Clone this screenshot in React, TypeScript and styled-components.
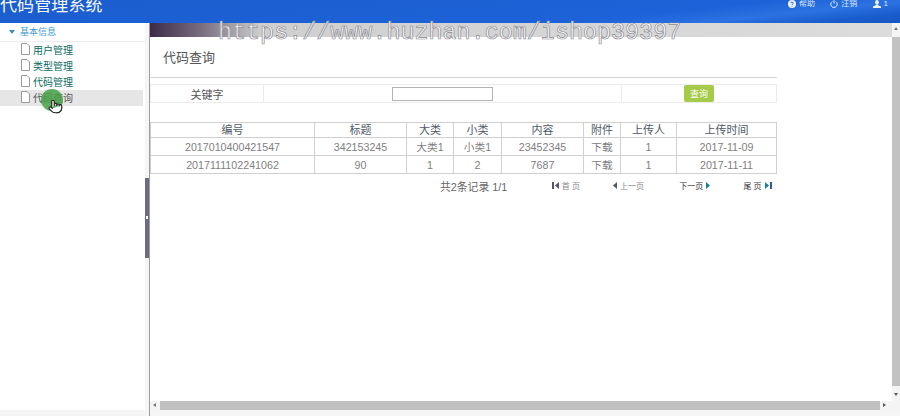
// Code management admin page: query screen

import React from 'react';
import styled, { createGlobalStyle } from 'styled-components';
import { Pointer } from 'lucide-react';

const GlobalStyle = createGlobalStyle`
  * {
    margin: 0;
    padding: 0;
    box-sizing: border-box;
  }
  html, body {
    width: 100%;
    height: 100%;
    background-color: #ffffff;
    overflow: hidden;
  }
`;

const Page = styled.div`
  position: relative;
  width: 900px;
  height: 416px;
  overflow: hidden;
  display: flex;
  flex-direction: column;
  background: #fff;
  font-family: 'Liberation Sans', 'Noto Sans CJK SC', sans-serif;
  color: #666;
`;

const Header = styled.header`
  height: 23px;
  flex: none;
  display: flex;
  justify-content: space-between;
  align-items: flex-start;
  overflow: hidden;
  background: linear-gradient(174deg, #1b5dce 0%, #1d62d8 70%, #2c72e2 82%, #1a5ccc 92%, #1856c4 100%);
`;

const Brand = styled.h1`
  font-size: 17px;
  line-height: 17px;
  margin-top: -3px;
  font-weight: 400;
  letter-spacing: 0.1px;
  color: #f6f8fd;
`;

const HeaderTools = styled.div`
  display: flex;
  width: 100px;
  margin-right: 12px;
  justify-content: space-between;
`;

const HeaderTool = styled.span`
  display: flex;
  align-items: center;
  gap: 3px;
  height: 8px;
  font-size: 8px;
  line-height: 8px;
  color: #dce8fa;
`;

const Body = styled.div`
  flex: 1;
  min-height: 0;
  display: flex;
`;

const Sidebar = styled.aside`
  width: 145px;
  flex: none;
  display: flex;
  flex-direction: column;
  background: #fff;
`;

const GroupTitle = styled.div`
  height: 19px;
  flex: none;
  display: flex;
  align-items: center;
  gap: 4px;
  padding: 0 0 1px 9px;
  font-size: 9px;
  color: #3f9ad0;
  border-bottom: 1px solid #ececec;
`;

const GroupArrow = styled.i`
  width: 0;
  height: 0;
  margin-right: 1px;
  border-left: 3px solid transparent;
  border-right: 3px solid transparent;
  border-top: 4px solid #3f8fd0;
`;

const MenuList = styled.ul`
  list-style: none;
  margin-right: 2px;
`;

const MenuItem = styled.li<{ $active?: boolean }>`
  height: 16px;
  display: flex;
  align-items: center;
  gap: 3px;
  padding: 0 0 2px 21px;
  font-size: 10px;
  color: ${(p) => (p.$active ? '#555' : '#0b6a62')};
  background: ${(p) => (p.$active ? '#e6e6e6' : 'transparent')};
`;

const Splitter = styled.div`
  width: 5px;
  flex: none;
  display: flex;
  align-items: center;
  background: #f6f6f6;
  border-right: 1px solid #9d9d9d;
  padding-bottom: 4px;
`;

const SplitterHandle = styled.div`
  position: relative;
  width: 4px;
  height: 80px;
  background: #6a6a8a;
  &::after {
    content: '';
    position: absolute;
    left: 1px;
    top: 38px;
    width: 2px;
    height: 3px;
    background: #fff;
  }
`;

const Main = styled.div`
  flex: 1;
  min-width: 0;
  display: grid;
  grid-template-columns: 1fr 8px;
  grid-template-rows: 1fr 9px 6px;
`;

const Content = styled.main`
  min-width: 0;
  overflow: hidden;
`;

const TopStripe = styled.div`
  height: 14px;
  background: linear-gradient(90deg, #3d2a48 0%, #7a6e80 7%, #cfcfcf 15%, #dcdcdc 100%);
`;

const Panel = styled.section`
  width: 627px;
`;

const PageTitle = styled.h2`
  height: 41px;
  padding: 13px 0 0 13px;
  font-size: 13px;
  line-height: 16px;
  font-weight: 400;
  color: #555;
  border-bottom: 1px solid #d8d8d8;
`;

const SearchRow = styled.div`
  margin-top: 6px;
  height: 19px;
  display: grid;
  grid-template-columns: 112px 358px 155px;
  border: 1px solid #ececec;
  font-size: 11px;
`;

const SearchCell = styled.div`
  display: flex;
  align-items: center;
  justify-content: center;
  color: #555;
  & + & {
    border-left: 1px solid #ececec;
  }
`;

const SearchInput = styled.input`
  width: 101px;
  height: 14px;
  border: 1px solid #b4b4b4;
  background: #fff;
`;

const SearchButton = styled.button`
  width: 30px;
  height: 17px;
  border: 0;
  border-radius: 2px;
  background: #a5cb48;
  color: #fff;
  font: 9px 'Liberation Sans', 'Noto Sans CJK SC', sans-serif;
`;

const Table = styled.table`
  width: 627px;
  margin-top: 19px;
  border-collapse: collapse;
  table-layout: fixed;
  font-size: 11px;
  border: 1px solid #d0d0d0;
`;

const Th = styled.th`
  height: 15px;
  font-weight: 400;
  color: #4f5a68;
  border: 1px solid #d0d0d0;
  padding: 1px 0 0;
  line-height: 13px;
`;

const Td = styled.td`
  height: 18px;
  text-align: center;
  font-size: 10.7px;
  color: #808080;
  border: 1px solid #d0d0d0;
  padding: 1px 0 0;
  line-height: 13px;
`;

const Pager = styled.div`
  display: flex;
  align-items: center;
  height: 23px;
  padding: 0 0 0 290px;
  font-size: 8px;
  color: #777;
`;

const PagerTotal = styled.span`
  width: 113px;
  font-size: 10.8px;
  color: #666;
`;

const PagerLink = styled.span<{ $width: number; $dark?: boolean }>`
  display: flex;
  align-items: center;
  gap: 2px;
  width: ${(p) => p.$width}px;
  color: ${(p) => (p.$dark ? '#333' : '#888')};
  white-space: nowrap;
`;

const VScroll = styled.div`
  position: relative;
  background: #f4f4f4;
  display: flex;
  flex-direction: column;
  grid-row: 1;
  grid-column: 2;
`;

const ScrollThumbV = styled.div`
  flex: 1;
  background: #c2c2c2;
  margin: 14px 0 15px;
`;

const ScrollArrow = styled.i<{ $dir: 'up' | 'down' | 'left' | 'right' }>`
  position: absolute;
  width: 0;
  height: 0;
  ${(p) => (p.$dir === 'up' || p.$dir === 'down') && `
    left: 2px;
    border-left: 2px solid transparent;
    border-right: 2px solid transparent;
  `}
  ${(p) => (p.$dir === 'left' || p.$dir === 'right') && `
    top: 2px;
    border-top: 2px solid transparent;
    border-bottom: 2px solid transparent;
  `}
  ${(p) => p.$dir === 'up' && 'top: 4px; border-bottom: 3px solid #777;'}
  ${(p) => p.$dir === 'down' && 'bottom: 5px; border-top: 3px solid #555;'}
  ${(p) => p.$dir === 'left' && 'left: 3px; border-right: 3px solid #777;'}
  ${(p) => p.$dir === 'right' && 'right: 14px; border-left: 3px solid #555;'}
`;

const HScroll = styled.div`
  position: relative;
  grid-row: 2;
  grid-column: 1 / 3;
  display: flex;
  align-items: stretch;
  background: #f4f4f4;
  padding: 0 20px 0 10px;
`;

const ScrollThumbH = styled.div`
  flex: 1;
  background: #c0c0c0;
`;

const BottomStrip = styled.div`
  grid-row: 3;
  grid-column: 1 / 3;
  background: #f5f5f5;
`;

const SideFooter = styled.div`
  margin-top: auto;
  height: 6px;
  background: #f5f5f5;
`;

const Watermark = styled.div`
  position: absolute;
  left: 218px;
  top: 19px;
  font-family: 'Liberation Mono', monospace;
  font-size: 23.4px;
  line-height: 28px;
  white-space: nowrap;
  color: rgba(255, 255, 255, 0.85);
  -webkit-text-stroke: 0.7px #8c8c94;
`;

const ClickMark = styled.div`
  position: absolute;
  left: 41px;
  top: 89px;
  width: 22px;
  height: 22px;
  border-radius: 50%;
  background: rgba(70, 160, 70, 0.85);
`;

const Cursor = styled.div`
  position: absolute;
  left: 48px;
  top: 99px;
  display: flex;
  color: #222;
`;

const FileIcon = () => (
  <svg width="9" height="12" viewBox="0 0 9 12">
    <path d="M.5.5h5.5l2.5 2.5v8.5h-8z" fill="#fff" stroke="#9a9a9a" />
  </svg>
);

const HelpIcon = () => (
  <svg width="8" height="8" viewBox="0 0 8 8">
    <circle cx="4" cy="4" r="4" fill="#eef3fc" />
    <path d="M2.8 3.2a1.2 1.1 0 1 1 1.7 1L4 4.7M4 5.7v.8" fill="none" stroke="#1c5ed0" strokeWidth="1" />
  </svg>
);

const PowerIcon = () => (
  <svg width="8" height="8" viewBox="0 0 8 8" fill="none" stroke="#e6eefb" strokeWidth="1">
    <path d="M2.2 1.6a3.2 3.2 0 1 0 3.6 0M4 .2v3.4" />
  </svg>
);

const UserIcon = () => (
  <svg width="8" height="8" viewBox="0 0 8 8" fill="#eef3fc">
    <ellipse cx="4" cy="2.2" rx="1.8" ry="2.2" />
    <path d="M3 4.4h2l.3.9L8 6.4V8H0V6.4l2.700-1.100z" />
  </svg>
);

// direction 1 points right, -1 points left; bar draws the end stop of first/last page
const PagerIcon = ({ direction, bar, color }: { direction: 1 | -1; bar?: boolean; color: string }) => (
  <svg width={bar ? 8 : 6} height="7" viewBox={bar ? '0 0 8 7' : '0 0 6 7'} fill={color}>
    {direction === 1 ? (
      <>
        <path d="M1 0l4 3.500-4 3.500z" />
        {bar && <rect x="6" width="2" height="7" fill="#33589c" />}
      </>
    ) : (
      <>
        {bar && <rect width="2" height="7" />}
        <path d={bar ? 'M7 0L3 3.500l4 3.500z' : 'M5 0L1 3.500l4 3.500z'} />
      </>
    )}
  </svg>
);

const columns = [164, 92, 47, 48, 82, 37, 56, 100];
const headings = ['编号', '标题', '大类', '小类', '内容', '附件', '上传人', '上传时间'];
const rows = [
  ['2017010400421547', '342153245', '大类1', '小类1', '23452345', '下载', '1', '2017-11-09'],
  ['2017111102241062', '90', '1', '2', '7687', '下载', '1', '2017-11-11'],
];
const menu = ['用户管理', '类型管理', '代码管理', '代码查询'];

function App() {
  return (
    <>
      <GlobalStyle />
      <Page>
        <Header>
          <Brand>代码管理系统</Brand>
          <HeaderTools>
            <HeaderTool><HelpIcon />帮助</HeaderTool>
            <HeaderTool><PowerIcon />注销</HeaderTool>
            <HeaderTool><UserIcon />1</HeaderTool>
          </HeaderTools>
        </Header>
        <Body>
          <Sidebar>
            <GroupTitle><GroupArrow />基本信息</GroupTitle>
            <MenuList>
              {menu.map((label, i) => (
                <MenuItem key={label} $active={i === 3}><FileIcon />{label}</MenuItem>
              ))}
            </MenuList>
            <SideFooter />
          </Sidebar>
          <Splitter><SplitterHandle /></Splitter>
          <Main>
            <Content>
              <TopStripe />
              <Panel>
                <PageTitle>代码查询</PageTitle>
                <SearchRow>
                  <SearchCell>关键字</SearchCell>
                  <SearchCell><SearchInput /></SearchCell>
                  <SearchCell><SearchButton>查询</SearchButton></SearchCell>
                </SearchRow>
                <Table>
                  <colgroup>
                    {columns.map((w, i) => <col key={i} width={w} />)}
                  </colgroup>
                  <thead>
                    <tr>{headings.map((h) => <Th key={h}>{h}</Th>)}</tr>
                  </thead>
                  <tbody>
                    {rows.map((row) => (
                      <tr key={row[0]}>
                        {row.map((cell, i) => <Td key={i}>{cell}</Td>)}
                      </tr>
                    ))}
                  </tbody>
                </Table>
                <Pager>
                  <PagerTotal>共2条记录 1/1</PagerTotal>
                  <PagerLink $width={61}><PagerIcon direction={-1} bar color="#556" />首 页</PagerLink>
                  <PagerLink $width={68}><PagerIcon direction={-1} color="#556" />上一页</PagerLink>
                  <PagerLink $width={65} $dark>下一页<PagerIcon direction={1} color="#1f7f98" /></PagerLink>
                  <PagerLink $width={34} $dark>尾 页<PagerIcon direction={1} bar color="#1f7f98" /></PagerLink>
                </Pager>
              </Panel>
            </Content>
            <VScroll>
              <ScrollArrow $dir="up" />
              <ScrollThumbV />
              <ScrollArrow $dir="down" />
            </VScroll>
            <HScroll>
              <ScrollArrow $dir="left" />
              <ScrollThumbH />
              <ScrollArrow $dir="right" />
            </HScroll>
            <BottomStrip />
          </Main>
        </Body>
        <Watermark>https://www.huzhan.com/ishop39397</Watermark>
        <ClickMark />
        <Cursor><Pointer size={15} strokeWidth={1.8} fill="#fff" /></Cursor>
      </Page>
    </>
  );
}

export default App;
